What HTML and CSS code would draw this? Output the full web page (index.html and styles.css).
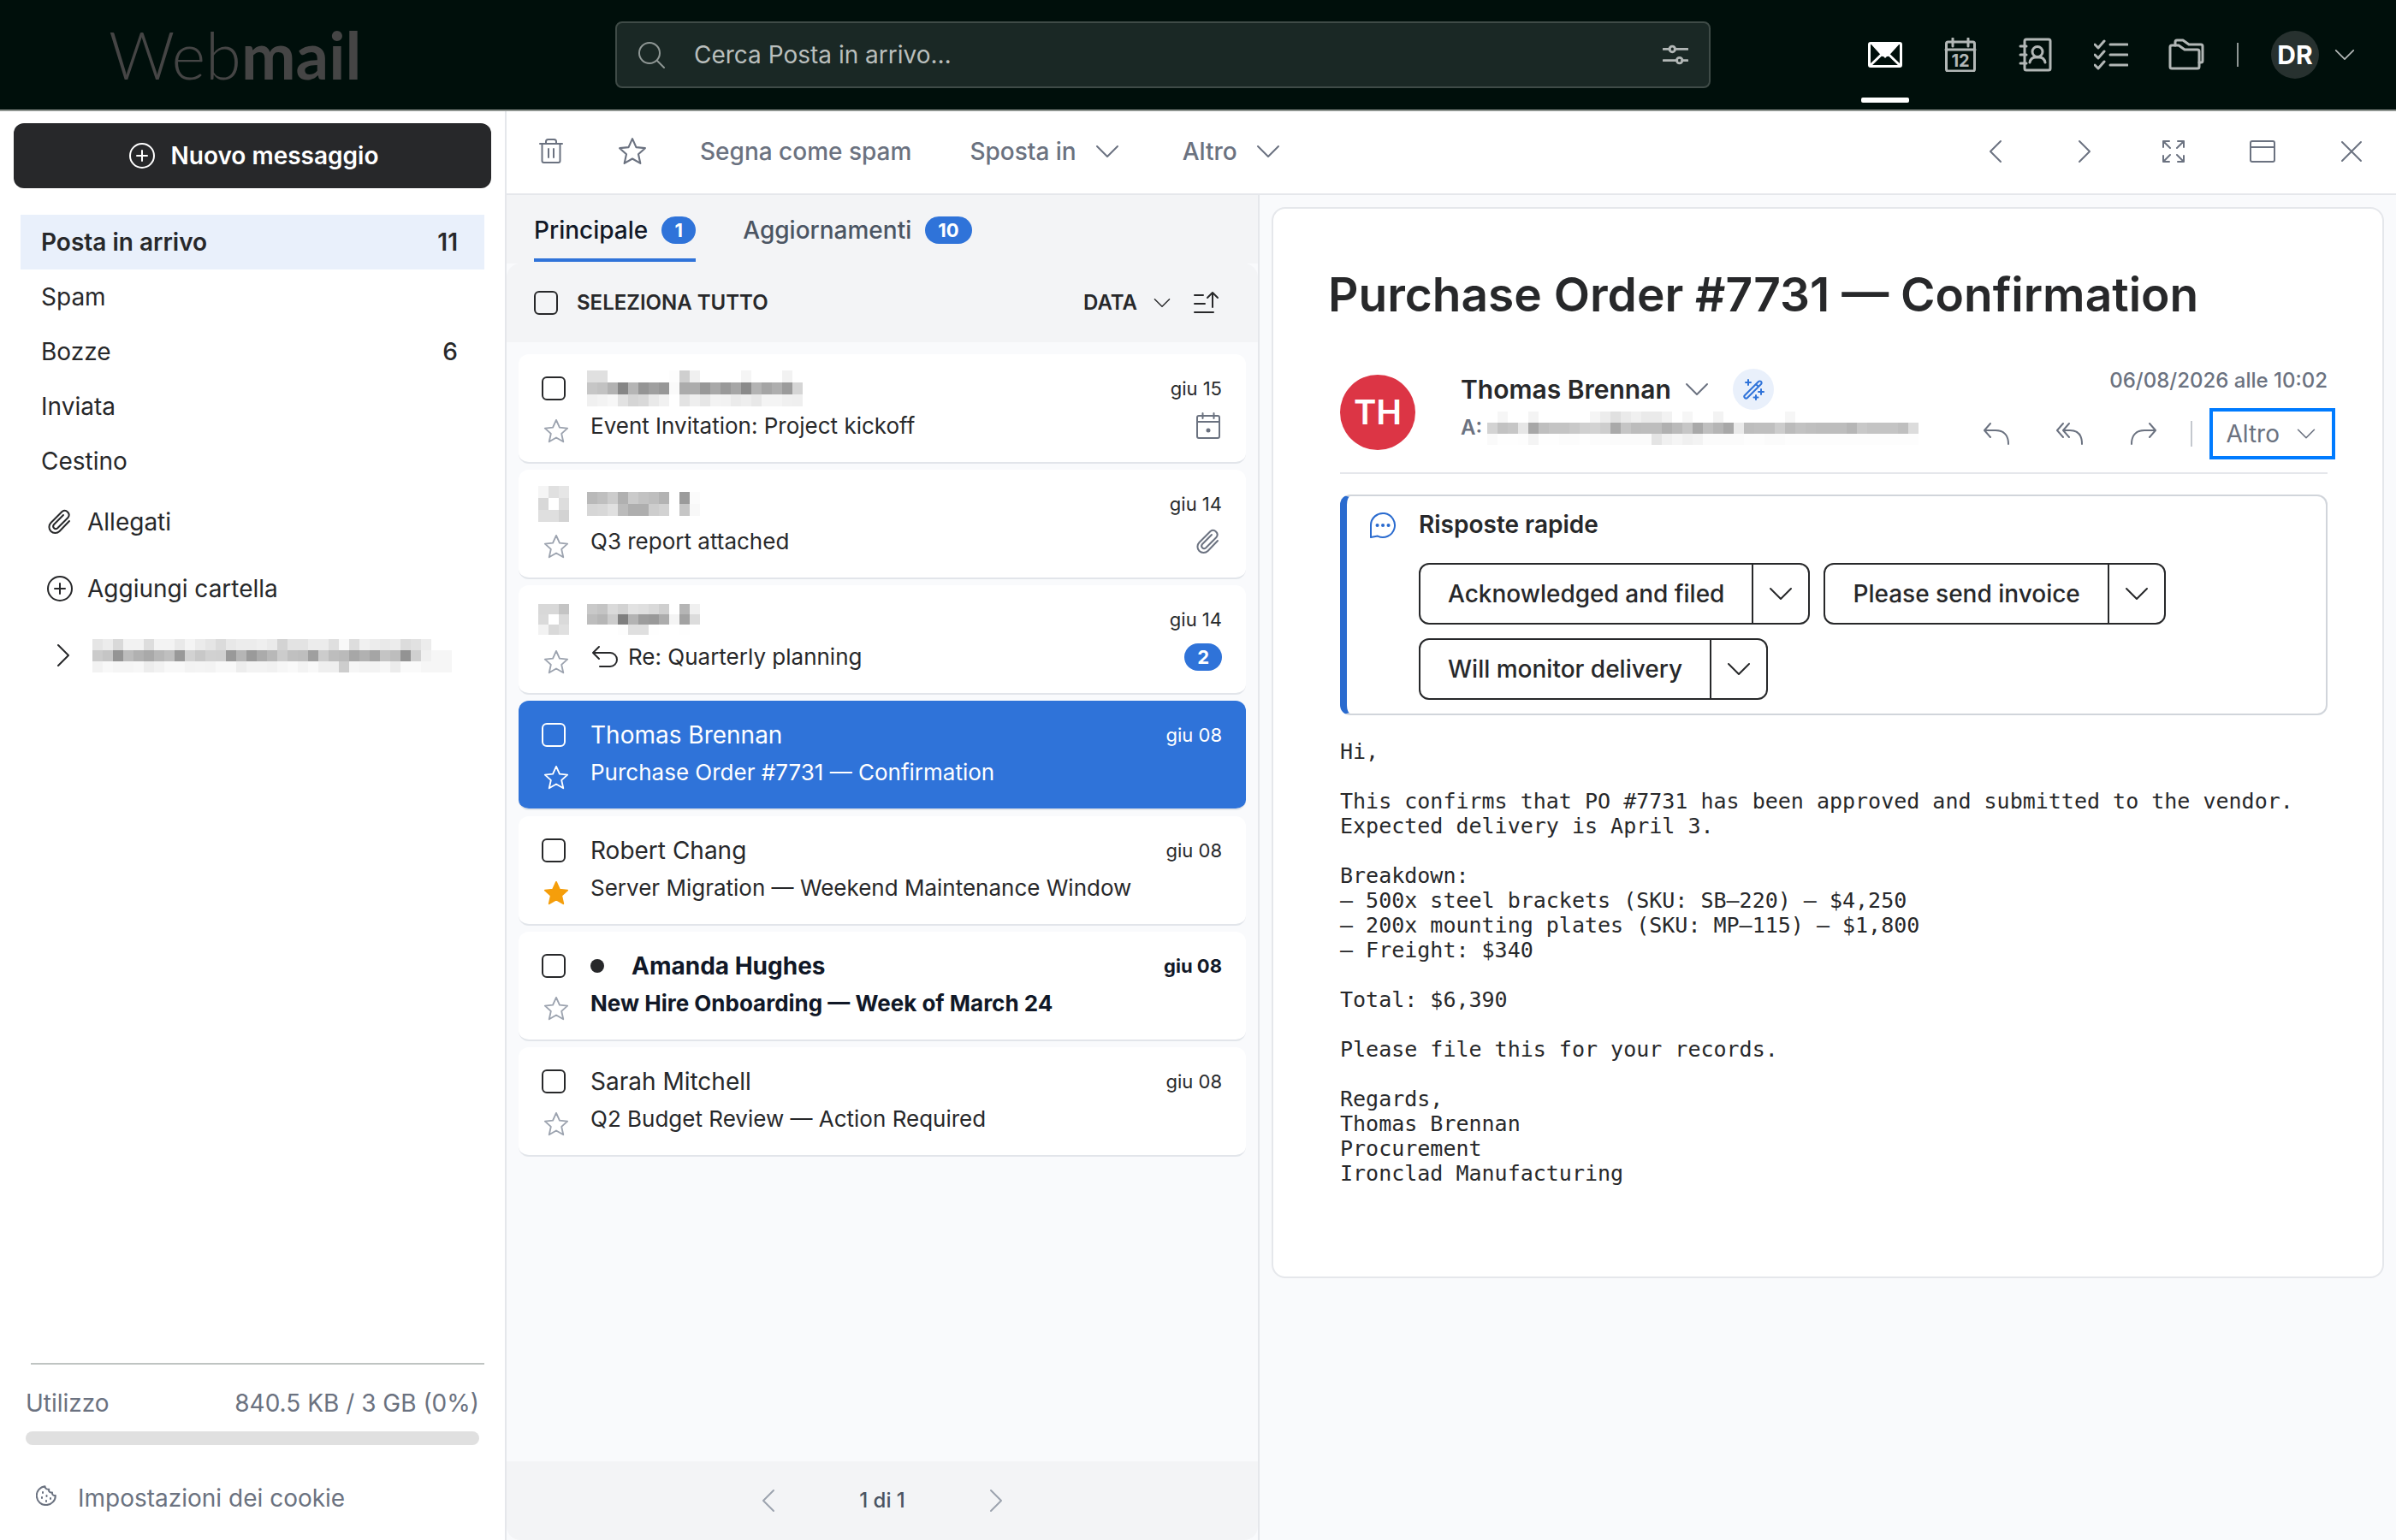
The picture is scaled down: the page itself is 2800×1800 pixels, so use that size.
FILE: index.html
```html
<!DOCTYPE html>
<html lang="it">
  <head>
    <meta charset="UTF-8" />
    <meta name="viewport" content="width=device-width, initial-scale=1.0" />
    <title>Webmail - Posta in arrivo</title>
    <link rel="stylesheet" href="styles.css">
  </head>
  <body>
    <!-- icon set -->
    <svg class="sprite" aria-hidden="true">
      <symbol id="i-down" viewBox="0 0 28 28"><path d="M2 8l12 12L26 8"/></symbol>
      <symbol id="i-left" viewBox="0 0 28 28"><path d="M20 2L8 14l12 12"/></symbol>
      <symbol id="i-right" viewBox="0 0 28 28"><path d="M8 2l12 12L8 26"/></symbol>
      <symbol id="i-plus" viewBox="0 0 32 32"><circle cx="16" cy="16" r="14"/><path d="M16 10v12M10 16h12"/></symbol>
      <symbol id="i-star" viewBox="0 0 32 32"><path d="M16 2l4.2 9.4 9.8 1-7.400 6.700 2.200 10L16 24l-8.800 5.100 2.200-10L2 12.400l9.800-1z"/></symbol>
      <symbol id="i-clip" viewBox="0 0 32 32"><path d="M27 15L15.500 27a7 7 0 0 1-10-10L18.500 4a5 5 0 0 1 7 7L13 23.500a3 3 0 0 1-4.200-4.200L20 8"/></symbol>
      <symbol id="i-trash" viewBox="0 0 32 32"><path d="M3 7h26M5.500 7v20a2 2 0 0 0 2 2h17a2 2 0 0 0 2-2V7M10 7V4.500A2.500 2.500 0 0 1 12.500 2h7A2.500 2.500 0 0 1 22 4.500V7M13 13v10M19 13v10"/></symbol>
      <symbol id="i-search" viewBox="0 0 32 32"><circle cx="14" cy="14" r="12"/><path d="M23 23l8 8"/></symbol>
      <symbol id="i-sliders" viewBox="0 0 32 32"><path d="M1 9h8M15 9h16M1 23h17M24 23h7"/><circle cx="12" cy="9" r="3.500"/><circle cx="21" cy="23" r="3.500"/></symbol>
      <symbol id="i-reply" viewBox="0 0 32 32"><path d="M9 4L2 12l7 8M2 12h13c9 0 15 5 15 16"/></symbol>
      <symbol id="i-reply-all" viewBox="0 0 32 32"><path d="M8 4l-7 8 7 8M15 4l-7 8 7 8M8 12h8c9 0 14 5 14 16"/></symbol>
      <symbol id="i-forward" viewBox="0 0 32 32"><path d="M23 4l7 8-7 8M30 12H17C8 12 2 17 2 28"/></symbol>
    </svg>

    <header class="topbar">
      <a href="#" class="logo">Web<b>mail</b></a>
      <form class="search">
        <svg class="icon" width="32" height="32"><use href="#i-search"/></svg>
        <input type="search" placeholder="Cerca Posta in arrivo…" aria-label="Cerca Posta in arrivo">
        <button type="button" aria-label="Filtri"><svg class="icon thick" width="30" height="30"><use href="#i-sliders"/></svg></button>
      </form>
      <nav class="apps">
        <a href="#" class="active" aria-label="Posta">
          <svg width="40" height="40" viewBox="0 0 40 40"><rect x="1.500" y="6.500" width="37" height="27" rx="1.500" fill="none" stroke="#fff" stroke-width="3"/><path d="M2 6h36L23.500 22h-1.500l-2 2-2-2h-1.500z" fill="#fff"/><path d="M2 33l13.500-13M38 33L24.500 20" stroke="#fff" stroke-width="3"/></svg>
        </a>
        <a href="#" aria-label="Calendario">
          <svg class="icon" width="40" height="40" viewBox="0 0 40 40"><rect x="3.500" y="5" width="33" height="34" rx="2"/><path d="M3 14h34M11 1v9M29 1v9"/><text x="20" y="34" class="cal-day">12</text></svg>
        </a>
        <a href="#" aria-label="Contatti">
          <svg class="icon" width="40" height="40" viewBox="0 0 40 40"><rect x="7" y="2" width="30" height="36" rx="2"/><path d="M2 10h7M2 20h7M2 30h7M13 29c1-5 4-6 7-6h4c3 0 6 1 7 6"/><circle cx="22" cy="16.500" r="6"/></svg>
        </a>
        <a href="#" aria-label="Attività">
          <svg class="icon" width="40" height="40" viewBox="0 0 40 40"><path d="M1 8l4 4 7-8M1 20l4 4 7-8M1 32l4 4 7-8M19 8h20M19 20h20M19 32h20"/></svg>
        </a>
        <a href="#" aria-label="File">
          <svg class="icon" width="42" height="42" viewBox="0 0 42 42"><path d="M2 12a2 2 0 0 1 2-2h8l7 5h15a2 2 0 0 1 2 2v18a2 2 0 0 1-2 2H4a2 2 0 0 1-2-2z"/><path d="M8 10V6a2 2 0 0 1 2-2h7l7 5h14a2 2 0 0 1 2 2v17a2 2 0 0 1-2 2h-2"/></svg>
        </a>
      </nav>
      <button class="profile" aria-label="Profilo"><span class="initials">DR</span><svg class="icon" width="24" height="24"><use href="#i-down"/></svg></button>
    </header>

    <div class="app">
      <aside class="sidebar">
        <button class="compose"><svg class="icon" width="32" height="32"><use href="#i-plus"/></svg>Nuovo messaggio</button>
        <nav class="folders">
          <a href="#" class="active">Posta in arrivo <span>11</span></a>
          <a href="#">Spam</a>
          <a href="#">Bozze <span>6</span></a>
          <a href="#">Inviata</a>
          <a href="#">Cestino</a>
          <a href="#" class="tool"><svg class="icon" width="32" height="32"><use href="#i-clip"/></svg>Allegati</a>
          <a href="#" class="tool"><svg class="icon" width="32" height="32"><use href="#i-plus"/></svg>Aggiungi cartella</a>
          <a href="#" class="tool account" aria-label="Account"><svg class="icon" width="28" height="28"><use href="#i-right"/></svg><svg class="mosaic" data-cell="13" data-rows="e5ecd9f2f2ddf3f3e9f4ebe5dbe8ececefead3e3e3ececdff8ddf0ece9ecdce1ec cbc594bcb1a9b7bf99d2c8d1d099b59aabb8ccc0be9fccbdbaa7b1a5c4bd93d0f0f6f6 f2f8f5f5f7edf2f8f8f3f4f3f8f8edf3f3f1f6f9f3f8efefcdf6f3f3f7ecfafaf6f6f6"></svg></a>
        </nav>
        <div class="sidebar-footer">
          <hr>
          <div class="quota">
            <label for="quota">Utilizzo</label>
            <span>840.5 KB / 3 GB (0%)</span>
            <progress id="quota" value="0" max="100"></progress>
          </div>
          <a href="#" class="cookies">
            <svg class="icon" width="24" height="24" viewBox="0 0 24 24"><path d="M10.500 1.200A11 11 0 1 0 22.800 12c-2.500.5-4-1-3.800-3.500-2.500.5-4.500-1-3.800-3.700C12.500 5 10.500 3.500 10.500 1.200z"/><path d="M8 8v1M7 14v1M12.500 12v1M12 18v1M17 15v1"/></svg>
            Impostazioni dei cookie
          </a>
        </div>
      </aside>

      <div class="content">
        <div class="toolbar">
          <button aria-label="Elimina"><svg class="icon" width="32" height="32"><use href="#i-trash"/></svg></button>
          <button aria-label="Preferito"><svg class="icon" width="34" height="34"><use href="#i-star"/></svg></button>
          <button>Segna come spam</button>
          <button class="menu">Sposta in <svg class="icon" width="28" height="28"><use href="#i-down"/></svg></button>
          <button class="menu">Altro <svg class="icon" width="28" height="28"><use href="#i-down"/></svg></button>
          <div class="window-tools">
            <button aria-label="Precedente"><svg class="icon" width="28" height="28"><use href="#i-left"/></svg></button>
            <button aria-label="Successivo"><svg class="icon" width="28" height="28"><use href="#i-right"/></svg></button>
            <button aria-label="Espandi"><svg class="icon" width="28" height="28" viewBox="0 0 28 28"><path d="M2 9V2h7M2 2l8 8M19 2h7v7M26 2l-8 8M2 19v7h7M2 26l8-8M19 26h7v-7M26 26l-8-8"/></svg></button>
            <button aria-label="Finestra"><svg class="icon" width="32" height="28" viewBox="0 0 32 28"><rect x="2" y="2" width="28" height="24" rx="2"/><path d="M2 9h28"/></svg></button>
            <button aria-label="Chiudi"><svg class="icon" width="28" height="28" viewBox="0 0 28 28"><path d="M3 3l22 22M25 3L3 25"/></svg></button>
          </div>
        </div>

        <div class="panes">
          <section class="list">
            <div class="tabs" role="tablist">
              <button role="tab" class="active" aria-selected="true">Principale <span class="badge">1</span></button>
              <button role="tab">Aggiornamenti <span class="badge">10</span></button>
            </div>
            <div class="list-head">
              <label><input type="checkbox">SELEZIONA TUTTO</label>
              <div class="sort">
                <select aria-label="Ordina per"><option>DATA</option></select>
                <svg class="icon" width="20" height="20"><use href="#i-down"/></svg>
                <button aria-label="Ordine"><svg class="icon" width="32" height="32" viewBox="0 0 32 32"><path d="M2 7h10M2 17h12M2 27h22M23 21V4M17 10l6-6 6 6"/></svg></button>
              </div>
            </div>

            <div class="messages">
              <article class="message">
                <input type="checkbox" aria-label="Seleziona">
                <div class="from"><svg class="mosaic" data-cell="14" data-rows="e0e0fffffffffffffdcff0fffffffff5fffffff2ff c6c2b286b5959f97faabac97a899a68ab3a5ae9bd5 f0f3f7e2d5d9e9f1ffe3eee6f3f2ebeee8f4f4f0ef"></svg></div>
                <time>giu 15</time>
                <button class="star" aria-label="Preferito"><svg class="icon" width="30" height="30"><use href="#i-star"/></svg></button>
                <div class="subject">Event Invitation: Project kickoff</div>
                <div class="extra"><svg class="icon" width="32" height="32" viewBox="0 0 32 32"><rect x="3" y="4" width="26" height="26" rx="2"/><path d="M3 11h26M9.500 1v6M22.500 1v6"/><circle class="dot" cx="16" cy="21" r="1.500"/></svg></div>
              </article>
              <article class="message">
                <svg class="mosaic" data-cell="14" data-rows="f5e0e6 d8ffdd dfdfd3"></svg>
                <div class="from"><svg class="mosaic" data-cell="14" data-rows="b9bfccb0cac2beb3ff9bfb d6d8e0bbaeaecdd2ffc6f8"></svg></div>
                <time>giu 14</time>
                <button class="star" aria-label="Preferito"><svg class="icon" width="30" height="30"><use href="#i-star"/></svg></button>
                <div class="subject">Q3 report attached</div>
                <div class="extra"><svg class="icon" width="32" height="32"><use href="#i-clip"/></svg></div>
              </article>
              <article class="message">
                <svg class="mosaic" data-cell="12" data-rows="d8d8c4 daffda f2d9e0"></svg>
                <div class="from"><svg class="mosaic" data-cell="12" data-rows="c9c4dad2e2dfd9cfffb5f0 bdb6cc7fb39c99acf4a2dc fffffffddfdffefffffeff"></svg></div>
                <time>giu 14</time>
                <button class="star" aria-label="Preferito"><svg class="icon" width="30" height="30"><use href="#i-star"/></svg></button>
                <div class="subject"><svg class="icon" width="34" height="30" viewBox="0 0 34 30"><path d="M10 3L3 10l7 7M3 10h20a8 8 0 0 1 0 16H11"/></svg>Re: Quarterly planning</div>
                <div class="extra"><span class="badge">2</span></div>
              </article>
              <article class="message selected">
                <input type="checkbox" aria-label="Seleziona">
                <div class="from">Thomas Brennan</div>
                <time>giu 08</time>
                <button class="star" aria-label="Preferito"><svg class="icon" width="30" height="30"><use href="#i-star"/></svg></button>
                <div class="subject">Purchase Order #7731 — Confirmation</div>
              </article>
              <article class="message">
                <input type="checkbox" aria-label="Seleziona">
                <div class="from">Robert Chang</div>
                <time>giu 08</time>
                <button class="star on" aria-label="Preferito"><svg class="icon" width="30" height="30"><use href="#i-star"/></svg></button>
                <div class="subject">Server Migration — Weekend Maintenance Window</div>
              </article>
              <article class="message unread">
                <input type="checkbox" aria-label="Seleziona">
                <div class="from">Amanda Hughes</div>
                <time>giu 08</time>
                <button class="star" aria-label="Preferito"><svg class="icon" width="30" height="30"><use href="#i-star"/></svg></button>
                <div class="subject">New Hire Onboarding — Week of March 24</div>
              </article>
              <article class="message">
                <input type="checkbox" aria-label="Seleziona">
                <div class="from">Sarah Mitchell</div>
                <time>giu 08</time>
                <button class="star" aria-label="Preferito"><svg class="icon" width="30" height="30"><use href="#i-star"/></svg></button>
                <div class="subject">Q2 Budget Review — Action Required</div>
              </article>
            </div>

            <div class="pager">
              <button aria-label="Pagina precedente"><svg class="icon" width="28" height="28"><use href="#i-left"/></svg></button>
              <span>1 di 1</span>
              <button aria-label="Pagina successiva"><svg class="icon" width="28" height="28"><use href="#i-right"/></svg></button>
            </div>
          </section>

          <main class="reader">
            <article class="mail">
              <h1>Purchase Order #7731 — Confirmation</h1>
              <div class="mail-head">
                <div class="avatar">TH</div>
                <div class="people">
                  <div class="sender">
                    Thomas Brennan
                    <svg class="icon" width="28" height="28"><use href="#i-down"/></svg>
                    <button class="magic" aria-label="Assistente">
                      <svg class="icon" width="26" height="26" viewBox="0 0 26 26"><path d="M3 20L19 4a2 2 0 0 1 3 3L6 23a2 2 0 0 1-3-3zM16 7l3 3M7 2v6M4 5h6M22 13v6M19 16h6M16 20v5M13.500 22.500h5"/></svg>
                    </button>
                  </div>
                  <div class="recipient">A:<svg class="mosaic" data-cell="13" data-rows="fff6fffff4fffffffffff5ece0eaf0eaeaf2fff6fffff3fffffffffffff6 d3c2c6e6a7bfc4c4c9d0d2cda9c5bcbdbdb0bac6a9bfb5a8eabdbfbfccbbc2bfbdbdbdb6c8c4c4c4bfdc fafefefdf4fefefcfcfefcfcfbfbfbfbe4f0f5f0f3fbfbfbfbfdfdfbfbfdfdfdfdfdfdfdfdfdfdfdfdfd"></svg></div>
                </div>
                <div class="mail-side">
                  <time>06/08/2026 alle 10:02</time>
                  <div class="mail-actions">
                    <button aria-label="Rispondi"><svg class="icon" width="32" height="32"><use href="#i-reply"/></svg></button>
                    <button aria-label="Rispondi a tutti"><svg class="icon" width="32" height="32"><use href="#i-reply-all"/></svg></button>
                    <button aria-label="Inoltra"><svg class="icon" width="32" height="32"><use href="#i-forward"/></svg></button>
                    <button class="more">Altro <svg class="icon" width="22" height="22"><use href="#i-down"/></svg></button>
                  </div>
                </div>
              </div>

              <section class="quick">
                <svg class="icon" width="32" height="32" viewBox="0 0 32 32"><path d="M2 30V16a14 14 0 1 1 8 12.600z"/><path class="dots" d="M9.500 16h.1M16 16h.1M22.500 16h.1"/></svg>
                <div>
                  <h2>Risposte rapide</h2>
                  <div class="replies">
                    <div class="split"><button>Acknowledged and filed</button><button aria-label="Opzioni"><svg class="icon" width="28" height="28"><use href="#i-down"/></svg></button></div>
                    <div class="split"><button>Please send invoice</button><button aria-label="Opzioni"><svg class="icon" width="28" height="28"><use href="#i-down"/></svg></button></div>
                    <div class="split"><button>Will monitor delivery</button><button aria-label="Opzioni"><svg class="icon" width="28" height="28"><use href="#i-down"/></svg></button></div>
                  </div>
                </div>
              </section>

<pre>Hi,

This confirms that PO #7731 has been approved and submitted to the vendor.
Expected delivery is April 3.

Breakdown:
– 500x steel brackets (SKU: SB–220) – $4,250
– 200x mounting plates (SKU: MP–115) – $1,800
– Freight: $340

Total: $6,390

Please file this for your records.

Regards,
Thomas Brennan
Procurement
Ironclad Manufacturing</pre>
            </article>
          </main>
        </div>
      </div>
    </div>

    <script>
      // hidden names and addresses: one grey level (hex pair) per 12px cell
      document.querySelectorAll('.mosaic').forEach(svg => {
        const rows = svg.dataset.rows.split(' ').map(row => row.match(/../g));
        const cell = Number(svg.dataset.cell);
        const cols = Math.max(...rows.map(row => row.length));
        svg.setAttribute('width', cols * 12);
        svg.setAttribute('height', rows.length * cell);
        svg.innerHTML = rows.map((row, y) => row.map((g, x) =>
          `<rect x="${x * 12}" y="${y * cell}" width="12" height="${cell}" fill="#${g}${g}${g}"/>`
        ).join('')).join('');
      });
    </script>
  </body>
</html>
```
FILE: styles.css
```css
* {
  box-sizing: border-box;
}
body {
  margin: 0;
  height: 100vh;
  display: flex;
  flex-direction: column;
  font-family: Inter, "Liberation Sans", sans-serif;
  font-size: 28px;
  line-height: 36px;
  color: #27282a;
  background: #f9fafc;
}
a {
  color: inherit;
  text-decoration: none;
}
button, input, select {
  font: inherit;
  color: inherit;
  background: none;
  border: none;
  padding: 0;
  margin: 0;
}
button {
  display: flex;
  align-items: center;
  cursor: pointer;
}
.sprite {
  position: absolute;
  width: 0;
  height: 0;
}
svg {
  display: block;
  flex: none;
}
.icon {
  fill: none;
  stroke: currentColor;
  stroke-width: 2;
  stroke-linecap: round;
  stroke-linejoin: round;
}
.icon.thick {
  stroke-width: 3;
}
.icon .dot {
  fill: currentColor;
}
.mosaic {
  shape-rendering: crispEdges;
}
input[type="checkbox"] {
  appearance: none;
  width: 28px;
  height: 28px;
  border: 2px solid currentColor;
  border-radius: 6px;
}
.badge {
  min-width: 40px;
  height: 32px;
  padding: 0 15px;
  border-radius: 16px;
  background: #2f73d9;
  color: #fff;
  font-size: 22px;
  font-weight: 700;
  line-height: 32px;
  text-align: center;
}

/* top bar */
.topbar {
  flex: none;
  display: flex;
  align-items: center;
  height: 130px;
  padding-right: 48px;
  background: #000f0b;
  border-bottom: 2px solid #8f9590;
  color: #b2b7b6;
}
.logo {
  flex: 0 0 719px;
  padding-left: 127px;
  font-family: Lato, sans-serif;
  font-size: 76px;
  font-weight: 300;
  line-height: 100px;
  color: #454545;
}
.logo b {
  font-weight: 700;
}
.search {
  flex: 1;
  display: flex;
  align-items: center;
  gap: 34px;
  height: 78px;
  padding: 0 24px;
  border: 2px solid #3f4b47;
  border-radius: 8px;
  background: #1a2825;
}
.search > .icon {
  color: #8f9795;
}
.search input {
  flex: 1;
  min-width: 0;
  outline: none;
}
.search input::placeholder {
  color: #b9bebc;
  opacity: 1;
}
.apps {
  display: flex;
  align-self: stretch;
  margin-left: 160px;
}
.apps a {
  position: relative;
  display: flex;
  align-items: center;
  justify-content: center;
  width: 88px;
}
.apps .icon {
  stroke-width: 3;
}
.apps .active::after {
  content: "";
  position: absolute;
  left: 16px;
  bottom: 8px;
  width: 56px;
  height: 6px;
  border-radius: 2px;
  background: #fff;
}
.cal-day {
  fill: currentColor;
  stroke: none;
  font-size: 20px;
  font-weight: 700;
  text-anchor: middle;
}
.profile {
  gap: 18px;
}
.profile::before {
  content: "";
  width: 2px;
  height: 28px;
  margin: 0 20px 0 15px;
  background: #8f9795;
}
.initials {
  width: 56px;
  border-radius: 50%;
  background: #27312f;
  color: #fff;
  font-size: 30px;
  font-weight: 700;
  line-height: 56px;
  text-align: center;
}

/* sidebar */
.app {
  flex: 1;
  min-height: 0;
  display: flex;
}
.sidebar {
  flex: 0 0 592px;
  display: flex;
  flex-direction: column;
  padding: 14px 16px 29px;
  background: #fff;
  border-right: 2px solid #e5e7eb;
}
.compose {
  justify-content: center;
  gap: 18px;
  height: 76px;
  padding-left: 2px;
  border-radius: 12px;
  background: #27282a;
  color: #fff;
  font-weight: 600;
}
.folders {
  margin-top: 31px;
  padding: 0 8px;
}
.folders a {
  display: flex;
  align-items: center;
  justify-content: space-between;
  height: 64px;
  padding: 0 31px 0 24px;
}
.folders span {
  font-weight: 500;
}
.folders .active,
.folders .active span {
  background: #e9f0fb;
  font-weight: 600;
}
.folders .tool {
  justify-content: flex-start;
  gap: 16px;
  height: 78px;
  padding-left: 30px;
  padding-right: 0;
}
.folders .account {
  gap: 20px;
  padding-left: 36px;
}
.sidebar-footer {
  margin-top: auto;
  color: #6b7280;
}
.sidebar-footer hr {
  margin: 0 8px 0 20px;
  border: none;
  border-top: 2px solid #bfc4c2;
}
.quota {
  display: flex;
  flex-wrap: wrap;
  justify-content: space-between;
  row-gap: 15px;
  margin: 27px 14px 42px;
}
.quota progress {
  appearance: none;
  width: 100%;
  height: 16px;
  border: none;
  border-radius: 8px;
  overflow: hidden;
  background: #e0e0e0;
}
.quota progress::-webkit-progress-bar {
  background: #e0e0e0;
}
.cookies {
  display: flex;
  align-items: center;
  gap: 25px;
  height: 40px;
  padding-left: 26px;
}
.cookies .icon {
  margin-bottom: 6px;
}

/* toolbar */
.content {
  flex: 1;
  min-width: 0;
  display: flex;
  flex-direction: column;
}
.toolbar {
  flex: none;
  display: flex;
  align-items: center;
  gap: 62px;
  height: 98px;
  padding: 0 38px 2px 36px;
  background: #fff;
  border-bottom: 2px solid #e5e7eb;
  color: #6b7280;
  font-weight: 500;
}
.toolbar button {
  gap: 22px;
}
.toolbar .menu {
  padding: 0 6px;
}
.window-tools {
  display: flex;
  gap: 76px;
  margin-left: auto;
}
.window-tools button {
  justify-content: center;
  width: 28px;
}
.panes {
  flex: 1;
  min-height: 0;
  display: flex;
}

/* message list */
.list {
  flex: 0 0 880px;
  display: flex;
  flex-direction: column;
  border-right: 2px solid #e5e7eb;
}
.tabs {
  display: flex;
  gap: 55px;
  height: 80px;
  padding: 0 32px 2px;
  background: #f3f4f6;
  color: #4b5563;
  font-weight: 500;
}
.tabs button {
  gap: 16px;
  padding-top: 7px;
  border-bottom: 4px solid transparent;
}
.tabs .active {
  border-color: #2f73d9;
  color: #111827;
}
.list-head {
  display: flex;
  align-items: center;
  justify-content: space-between;
  height: 92px;
  padding: 0 44px 0 32px;
  border-radius: 16px 16px 0 0;
  background: #f3f4f6;
  font-size: 24px;
  font-weight: 600;
}
.list-head label,
.sort {
  display: flex;
  align-items: center;
}
.list-head label {
  gap: 22px;
}
.sort select {
  appearance: none;
}
.sort .icon {
  margin-left: 19px;
}
.sort button .icon {
  margin-left: 26px;
}
.messages {
  flex: 1;
  display: flex;
  flex-direction: column;
  gap: 7px;
  padding: 14px;
}
.message {
  display: grid;
  grid-template-columns: 54px 1fr auto;
  grid-template-rows: 40px 48px;
  column-gap: 16px;
  align-items: center;
  padding: 20px 28px 18px 14px;
  border-bottom: 2px solid #e2e5ea;
  border-radius: 12px;
  background: #fff;
}
.message > input,
.message > .mosaic {
  justify-self: center;
}
.from .mosaic {
  margin-left: -4px;
}
.message time {
  justify-self: end;
  font-size: 22px;
}
.subject {
  display: flex;
  align-items: center;
  gap: 10px;
  font-size: 26px;
}
.extra {
  display: flex;
  justify-self: end;
  color: #6b7280;
}
.star {
  align-self: end;
  justify-self: center;
  padding: 3px 0 3px 6px;
  color: #9ca3af;
}
.star.on {
  color: #f59e0b;
}
.star.on .icon {
  fill: currentColor;
}
.message.selected,
.selected .star {
  background: #2f73d9;
  color: #fff;
}
.unread {
  color: #111827;
  font-weight: 700;
}
.unread input {
  color: #27282a;
}
.unread .from {
  display: flex;
  align-items: center;
  gap: 32px;
}
.unread .from::before {
  content: "";
  width: 16px;
  height: 16px;
  border-radius: 50%;
  background: #27282a;
}
.pager {
  display: flex;
  align-items: center;
  justify-content: center;
  gap: 92px;
  height: 92px;
  border-radius: 0 0 16px 16px;
  background: #f3f4f6;
  color: #4b5563;
  font-size: 24px;
  font-weight: 500;
}
.pager button {
  color: #9ca3af;
}

/* open message */
.reader {
  flex: 1;
  min-width: 0;
  padding: 14px;
}
.mail {
  padding: 66px 64px 106px 78px;
  background: #fff;
  border: 2px solid #e5e7eb;
  border-radius: 16px;
}
.mail h1 {
  margin: 0 0 53px -14px;
  font-size: 55px;
  font-weight: 600;
  line-height: 68px;
}
.mail-head {
  display: flex;
  align-items: flex-start;
  height: 123px;
  border-bottom: 2px solid #e5e7eb;
  color: #6b7280;
}
.avatar {
  width: 88px;
  margin: 7px 53px 0 0;
  border-radius: 50%;
  background: #dc3545;
  color: #fff;
  font-size: 40px;
  font-weight: 600;
  line-height: 88px;
  text-align: center;
}
.sender {
  display: flex;
  align-items: center;
  gap: 16px;
  height: 48px;
  color: #27282a;
  font-size: 30px;
  font-weight: 600;
}
.sender > .icon {
  color: #6b7280;
}
.magic {
  justify-content: center;
  width: 48px;
  height: 48px;
  margin-left: 12px;
  border-radius: 50%;
  background: #e9f0fb;
  color: #2f73d9;
}
.recipient {
  display: flex;
  align-items: center;
  gap: 6px;
  height: 42px;
  font-size: 24px;
  font-weight: 600;
}
.mail-side {
  margin-left: auto;
}
.mail-side time {
  display: block;
  font-size: 24px;
  font-weight: 500;
  line-height: 28px;
  text-align: right;
}
.mail-actions {
  display: flex;
  align-items: center;
  gap: 54px;
  margin: 18px -9px 0 0;
}
.mail-actions .more {
  position: relative;
  gap: 20px;
  height: 60px;
  padding: 0 19px 0 15px;
  margin-left: 7px;
  border: 4px solid #007bff;
}
.more::before {
  content: "";
  position: absolute;
  left: -26px;
  width: 2px;
  height: 30px;
  background: #c4c8ce;
}
.quick {
  display: flex;
  gap: 26px;
  margin-top: 24px;
  padding: 15px 16px 16px 26px;
  border: 2px solid #d1d5db;
  border-left: 8px solid #2a6bcf;
  border-radius: 12px;
}
.quick > .icon {
  margin-top: 3px;
  color: #2a6bcf;
}
.quick .dots {
  stroke-width: 4;
}
.quick h2 {
  margin: 0 0 27px;
  font-size: 28px;
  font-weight: 600;
}
.replies {
  display: flex;
  flex-wrap: wrap;
  gap: 16px;
}
.split {
  display: flex;
  height: 72px;
  border: 2px solid #27282a;
  border-radius: 12px;
  font-weight: 500;
}
.split button {
  padding: 0 32px;
}
.split button + button {
  padding: 0 18px;
  border-left: 2px solid #27282a;
}
.mail pre {
  margin: 28px 0 0;
  font-family: "DejaVu Sans Mono", monospace;
  font-size: 25px;
  line-height: 29px;
}
```
